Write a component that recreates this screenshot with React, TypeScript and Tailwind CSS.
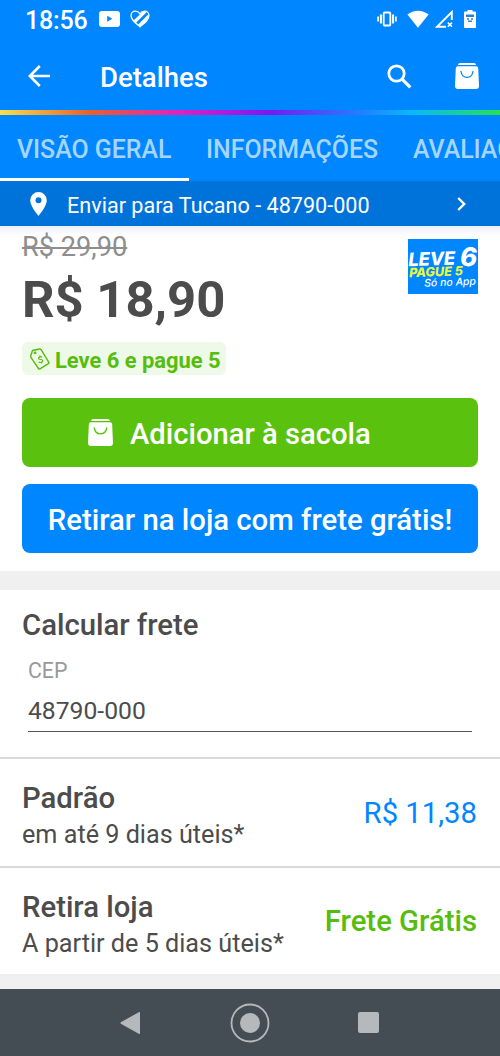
import type { ReactNode } from "react";

const TABS = ["VISÃO GERAL", "INFORMAÇÕES", "AVALIAÇÕES"];

function BagIcon({ className, smile }: { className: string; smile: string }) {
  return (
    <svg viewBox="0 0 24 26" className={className} fill="none">
      <path d="M5 0h14q1.6 0 2.2 1.9H2.8Q3.4 0 5 0z" fill="white" />
      <path d="M2.6 3.2h18.8q1.6 0 1.8 1.7L24 22.500q.2 3.500-2.800 3.500H2.800Q-.2 26 0 22.500L.8 4.900Q1 3.200 2.600 3.200z" fill="white" />
      <path d="M6 8.500c.6 3.900 3 5.800 6 5.800s5.400-1.900 6-5.800" stroke={smile} strokeWidth="1.300" strokeLinecap="round" />
    </svg>
  );
}

function StatusBar() {
  return (
    <div className="flex h-[38px] items-center pl-[25px] pr-6">
      <span className="w-[74px] pt-0.5 text-[25px] font-medium leading-[39px] tracking-[-0.2px]">18:56</span>
      <svg viewBox="0 0 21 16" className="h-4 w-[21px]">
        <rect width="21" height="16" rx="3" fill="white" />
        <path d="M8.200 4.800v6l5.200-3z" fill="#0086ff" />
      </svg>
      <svg viewBox="0 0 20 18" className="ml-2.5 h-[18px] w-5" fill="none">
        <path d="M10 16.800C5 12.600 1 9.600 1 5.600 1 3 2.900 1.200 5.300 1.200c1.900 0 3.600.9 4.700 2.600 1.100-1.700 2.800-2.600 4.700-2.600C17.100 1.200 19 3 19 5.600c0 4-4 7-9 11.200z" stroke="white" strokeWidth="1.300" />
        <path d="M3.500 10.500L13 1.400q2.300-.6 4 .4L6 12.800zM8 14.700L18.700 4q.6 3-1.400 5.500L10 16.500z" fill="white" />
      </svg>

      {/* Right-hand indicators */}
      <div className="ml-auto flex items-center">
        <svg viewBox="0 0 20 16" className="h-4 w-5" fill="none" stroke="white">
          <rect x="6.700" y="1.500" width="6.600" height="13" rx="1" strokeWidth="1.800" />
          <path d="M3.900 3.500v9M16.100 3.500v9" strokeWidth="2" />
          <path d="M1.100 5.500v5M18.900 5.500v5" strokeWidth="1.700" />
        </svg>
        <svg viewBox="0 0 22 18" className="ml-2.5 h-[18px] w-[22px]">
          <path d="M11 17.700L.4 4.600C6.500-.7 15.500-.7 21.600 4.600z" fill="white" />
        </svg>
        <svg viewBox="0 0 18 18" className="ml-1.5 h-[18px] w-[18px]" fill="none" stroke="white">
          <path d="M16.800 10V2L2 16.800h9" strokeWidth="1.900" />
          <path d="M12.800 12.600l4.200 4.200M17 12.600l-4.200 4.200" strokeWidth="1.500" />
        </svg>
        <svg viewBox="0 0 12 18" className="ml-[11px] h-[18px] w-3">
          <path d="M3.500 0h5v1.500H11q1 0 1 1V17q0 1-1 1H1q-1 0-1-1V2.500q0-1 1-1h2.500z" fill="white" />
          <path d="M2 4.500h8V7H2zM3 8.300h2v1.500H3zM7 8.300h2v1.500H7zM4 10.500h4v1.500H4z" fill="#2f7fd0" />
        </svg>
      </div>
    </div>
  );
}

function AppBar() {
  return (
    <header className="flex h-[72px] items-center pl-7 pr-[21px] pt-1">
      <svg viewBox="0 0 22 22" className="h-[22px] w-[22px]" fill="none" stroke="white" strokeWidth="2.600">
        <path d="M22 11H2M11.800 1L1.800 11l10 10" />
      </svg>
      <h1 className="ml-[50px] mt-[3px] text-[27.500px] font-medium leading-8">Detalhes</h1>
      <svg viewBox="0 0 25 25" className="ml-auto h-[25px] w-[25px]" fill="none" stroke="white">
        <circle cx="9.500" cy="9.500" r="7.700" strokeWidth="2.800" />
        <path d="M15.300 15.300l8 8" strokeWidth="3.200" />
      </svg>
      <BagIcon className="ml-[43px] h-[26px] w-6" smile="#0086ff" />
    </header>
  );
}

function Tabs() {
  return (
    <nav className="flex h-[66px] overflow-hidden whitespace-nowrap text-[24.900px] font-medium leading-[69px] text-[#a6d6ff]">
      {TABS.map((tab, i) => (
        <div
          key={tab}
          className={
            i === 0
              ? "w-[189px] shrink-0 border-b-[3px] border-white pl-[17px]"
              : i === 1
                ? "w-[207px] shrink-0 pl-[17px]"
                : "shrink-0 pl-[17px]"
          }
        >
          {tab}
        </div>
      ))}
    </nav>
  );
}

function ShippingRow({ title, detail, children }: { title: string; detail: string; children: ReactNode }) {
  return (
    <div className="flex flex-1 items-center justify-between pl-[22px] pr-[23px]">
      <div className="pt-2 text-[#4c4c4c]">
        <h3 className="text-[29.300px] font-medium leading-[38px]">{title}</h3>
        <p className="text-[25.200px] leading-9">{detail}</p>
      </div>
      {children}
    </div>
  );
}

export default function App() {
  return (
    <div className="flex h-[1056px] w-[500px] flex-col overflow-hidden whitespace-nowrap bg-white font-['Roboto',sans-serif]">
      <div className="bg-[#0086ff] text-white">
        <StatusBar />
        <AppBar />
        <div className="h-[5px] bg-[linear-gradient(90deg,#f5e050_0%,#e8602c_18%,#e020c0_36%,#7a18f0_54%,#2878ff_71%,#08b8f8_82%,#20d878_96%,#28e050_100%)]" />
        <Tabs />
        <div className="flex h-[45px] items-center bg-[#0073db] pl-[30px] pr-[33px]">
          <svg viewBox="0 0 17 24" className="h-6 w-[17px]">
            <path d="M8.500 0a8.300 8.300 0 0 0-8.300 8.300C.2 14.500 8.500 24 8.500 24s8.300-9.500 8.300-15.700A8.300 8.300 0 0 0 8.500 0zm0 11.300a3 3 0 1 1 0-6 3 3 0 0 1 0 6z" fill="white" />
          </svg>
          <span className="ml-5 mt-[4px] text-[21.600px] leading-6">Enviar para Tucano - 48790-000</span>
          <svg viewBox="0 0 9 14" className="ml-auto mr-px h-3.5 w-[9px]" fill="none" stroke="white" strokeWidth="2.400">
            <path d="M1.200 1l6 6-6 6" />
          </svg>
        </div>
      </div>

      {/* Price and actions */}
      <section className="h-[345px] bg-[linear-gradient(180deg,#eeeef8_0px,#ffffff_10px)] px-[22px] pt-[5px]">
        <div className="flex justify-between">
          <div>
            <div className="text-[27.200px] leading-8 text-[#8e8e8e] line-through decoration-[1.500px]">R$ 29,90</div>
            <div className="text-[50.800px] font-bold leading-[74px] text-[#4c4c4c]">R$ 18,90</div>
            <div className="mt-[5px] flex h-[33px] w-[204px] items-center rounded-md bg-[#eef9e7] pl-2 text-[#56bd0e]">
              <svg viewBox="0 0 20 22" className="h-[22px] w-5 shrink-0" fill="none" stroke="currentColor" strokeWidth="1.400" strokeLinejoin="round">
                <path d="M2.500 2.500L9.500 1q1-.2 1.600.7l7.600 12.500q.5.900-.3 1.400L10 20.900q-.9.500-1.500-.4L.9 9.300q-.4-.6-.2-1.300z" />
                <circle cx="5" cy="4.800" r=".7" />
                <path d="M12 9.300c-1-1.200-3.800-.3-3.500 1.200.3 1.600 4 .4 4.300 2.100.3 1.600-2.800 2.600-4 1.200M9.600 7.500l.6 1.200M11.400 14.300l.6 1.300" strokeWidth="1.200" />
              </svg>
              <span className="ml-[5px] mt-[3px] text-[21.900px] font-bold leading-[33px]">Leve 6 e pague 5</span>
            </div>
          </div>
          <div className="mt-2 flex h-[55px] w-[70px] flex-col overflow-hidden bg-[#0086ff] font-['Inter',sans-serif] italic text-white">
            <div className="flex h-7 -rotate-2 items-end justify-between font-extrabold">
              <span className="text-[18.500px] leading-[18px] tracking-[-0.2px]">LEVE</span>
              <span className="mr-px text-[26px] leading-[19px]">6</span>
            </div>
            <div className="-rotate-2 pl-px text-[12.700px] font-extrabold leading-[10px] text-[#e6fa3c]">PAGUE 5</div>
            <div className="-rotate-2 pr-0.5 text-right text-[10.500px] font-medium leading-[11px]">Só no App</div>
          </div>
        </div>
        <button className="mt-[23px] flex h-[69px] w-full items-center rounded-lg bg-[#5ac20e] pl-[66px] text-[29.200px] font-medium text-white">
          <BagIcon className="h-[27px] w-[25px]" smile="#5ac20e" />
          <span className="ml-[17px] mt-[5px]">Adicionar à sacola</span>
        </button>
        <button className="mt-[17px] h-[69px] w-full rounded-lg bg-[#0086ff] pt-[5px] text-[29.300px] font-medium text-white">
          Retirar na loja com frete grátis!
        </button>
      </section>

      <div className="h-[19px] bg-[#f0f0f0]" />

      {/* Freight calculator */}
      <section className="h-[167px] px-[22px] pt-[17px]">
        <h2 className="text-[29.300px] font-medium leading-9 text-[#4c4c4c]">Calcular frete</h2>
        <div className="mx-1.5 mt-[15px] border-b border-[#555555] pb-[5px]">
          <div className="text-[21.300px] leading-[26px] text-[#999999]">CEP</div>
          <div className="mt-[11px] text-[24.700px] leading-[31px] text-[#4c4c4c]">48790-000</div>
        </div>
      </section>
      <div className="flex h-[217px] flex-col">
        <div className="h-0.5 bg-[#dadada]" />
        <ShippingRow title="Padrão" detail="em até 9 dias úteis*">
          <span className="pt-px text-[29.300px] leading-9 text-[#0086ff]">R$ 11,38</span>
        </ShippingRow>
        <div className="h-0.5 bg-[#dadada]" />
        <ShippingRow title="Retira loja" detail="A partir de 5 dias úteis*">
          <span className="pt-px text-[29.300px] font-medium leading-9 text-[#56bd0e]">Frete Grátis</span>
        </ShippingRow>
      </div>
      <div className="h-[15px] bg-[#f0f0f0]" />

      {/* Android navigation */}
      <div className="flex h-[67px] items-center bg-[#454d54] pl-[120px]">
        <svg viewBox="0 0 20 24" className="h-6 w-5" fill="#b5b9bb">
          <path d="M20 1.500v21q0 .8-.8.500L.8 12.700q-.7-.7 0-1.400L19.200 1q.8-.3.800.5z" />
        </svg>
        <svg viewBox="0 0 40 40" className="ml-[90px] h-10 w-10">
          <circle cx="20" cy="20" r="18.500" fill="none" stroke="#b5b9bb" strokeWidth="1.800" />
          <circle cx="20" cy="20" r="10" fill="#b5b9bb" />
        </svg>
        <div className="ml-[88px] h-[21px] w-[21px] rounded-[2px] bg-[#b5b9bb]" />
      </div>
    </div>
  );
}
